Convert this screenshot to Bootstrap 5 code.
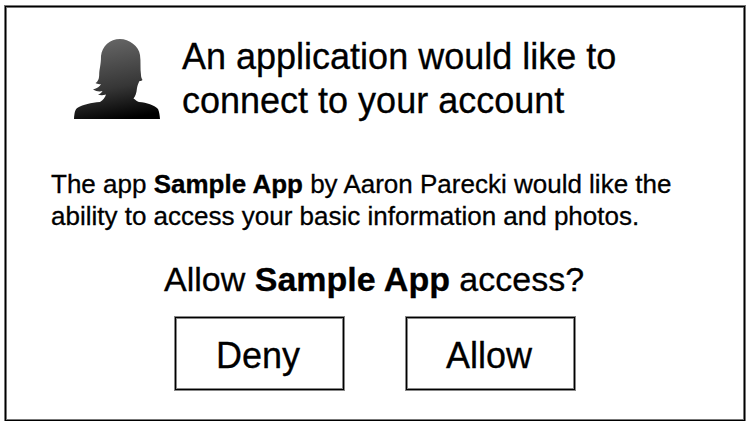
<!DOCTYPE html>
<html lang="en">
<head>
<meta charset="utf-8">
<title>Authorize application</title>
<link href="https://cdn.jsdelivr.net/npm/bootstrap@5.3.0/dist/css/bootstrap.min.css" rel="stylesheet">
<style>
body{background:#fff;color:#000;font-family:"Liberation Sans",Arial,sans-serif;-webkit-text-stroke:.3px #000}
.consent{width:740px;height:415px;margin:6px 0 0 5px;padding:28px 0 0 45px;border:1px solid #000;box-shadow:0 0 0 1px #777,inset 0 0 0 1px #777}
.avatar{width:86px;height:80px;margin:4px 22px 0 23px}
.headline{font-size:36px;line-height:44px;margin:0}
.details{font-size:26px;line-height:32px;margin:45px 0 0}
.question{font-size:34px;line-height:40px;margin:27px 0 0 113px}
.actions{gap:62px;margin:18px 0 0 124px}
.choice{width:169px;height:73px;padding:2px 3px 0 0;border:1px solid #000;box-shadow:0 0 0 1px #888,inset 0 0 0 1px #888;border-radius:0;font-size:36px;line-height:71px;color:#000;background:#fff}
</style>
<script src="https://cdn.jsdelivr.net/npm/bootstrap@5.3.0/dist/js/bootstrap.bundle.min.js"></script>
</head>
<body class="overflow-hidden">
<main class="consent">
<header class="d-flex align-items-start">
<svg class="avatar flex-shrink-0" viewBox="0 0 86 80" aria-hidden="true">
<defs><linearGradient id="shade" x1=".4" y1="0" x2=".6" y2="1"><stop offset="0" stop-color="#666"/><stop offset=".6" stop-color="#363636"/><stop offset="1" stop-color="#000"/></linearGradient></defs>
<path fill="url(#shade)" d="M0 80C.4 74 1 70 4 68.500C9 65.500 17 63.700 26 63C29 61 31 58.500 32 55.500C29 56.500 26.500 56.500 24 55.500C26 55 27.500 54 28.500 52C26 53 22 52.500 19 50.500C23 49.500 26 47.500 27 45C25 45.500 23 45 21.500 44C24 42.500 25.200 40 25.200 35C25.300 30 27 26 27 17C28 7 36 0 46 0C55 0 65 7 66 16C67 23 66 29 67 36C67 38 67.500 39 68.500 41C67.500 42 66.500 42 65.500 42C64.500 44 63.500 46 63 49C62.500 54 61.500 57 59.500 59.500C61.500 61 63.500 62.500 65 63C73 63.500 80 66 84 70C85.300 73 85.700 76 86 80Z"/>
</svg>
<h1 class="headline fw-normal">An application would like to<br>connect to your account</h1>
</header>
<p class="details">The app <strong>Sample App</strong> by Aaron Parecki would like the<br>ability to access your basic information and photos.</p>
<p class="question">Allow <strong>Sample App</strong> access?</p>
<div class="actions d-flex">
<button type="button" class="choice btn">Deny</button>
<button type="button" class="choice btn">Allow</button>
</div>
</main>
</body>
</html>
